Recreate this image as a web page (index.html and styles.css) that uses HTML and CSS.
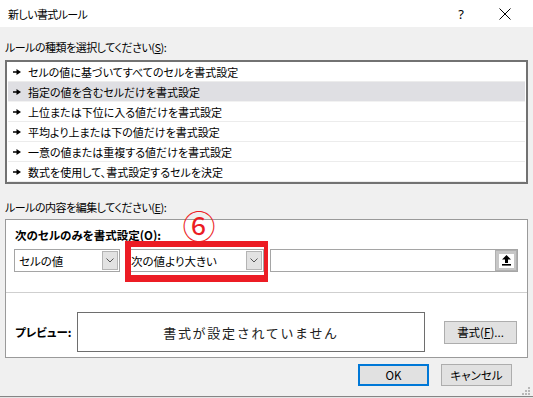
FILE: index.html
```html
<!DOCTYPE html>
<html lang="ja">
<head>
<meta charset="utf-8">
<title>新しい書式ルール</title>
<link rel="stylesheet" href="styles.css">
</head>
<body>
<div class="dialog">
  <header class="titlebar">
    <span class="title">新しい書式ルール</span>
    <div class="tb-icons">
      <span class="help">?</span>
      <svg class="close" width="12" height="12" viewBox="0 0 12 12"><path d="M0.5 0.5L11.5 11.5M11.5 0.5L0.5 11.5" stroke="#000" stroke-width="1" fill="none"/></svg>
    </div>
  </header>
  <main class="content">
    <div class="label label1">ルールの種類を選択してください(<u>S</u>):</div>
    <ul class="listbox">
      <li class="item"><svg class="bullet" width="8" height="6" viewBox="0 0 8 6"><path d="M0 2.3h3.5V0l4.5 3-4.5 3V3.7H0z" fill="#000"/></svg><span>セルの値に基づいてすべてのセルを書式設定</span></li>
      <li class="item selected"><svg class="bullet" width="8" height="6" viewBox="0 0 8 6"><path d="M0 2.3h3.5V0l4.5 3-4.5 3V3.7H0z" fill="#000"/></svg><span>指定の値を含むセルだけを書式設定</span></li>
      <li class="item"><svg class="bullet" width="8" height="6" viewBox="0 0 8 6"><path d="M0 2.3h3.5V0l4.5 3-4.5 3V3.7H0z" fill="#000"/></svg><span>上位または下位に入る値だけを書式設定</span></li>
      <li class="item"><svg class="bullet" width="8" height="6" viewBox="0 0 8 6"><path d="M0 2.3h3.5V0l4.5 3-4.5 3V3.7H0z" fill="#000"/></svg><span>平均より上または下の値だけを書式設定</span></li>
      <li class="item"><svg class="bullet" width="8" height="6" viewBox="0 0 8 6"><path d="M0 2.3h3.5V0l4.5 3-4.5 3V3.7H0z" fill="#000"/></svg><span>一意の値または重複する値だけを書式設定</span></li>
      <li class="item"><svg class="bullet" width="8" height="6" viewBox="0 0 8 6"><path d="M0 2.3h3.5V0l4.5 3-4.5 3V3.7H0z" fill="#000"/></svg><span>数式を使用して、書式設定するセルを決定</span></li>
    </ul>
    <div class="label label2">ルールの内容を編集してください(<u>E</u>):</div>
    <section class="panel">
      <div class="panel-top">
        <div class="heading">次のセルのみを書式設定(<u>O</u>):</div>
        <div class="combo-row">
          <div class="combo c1"><span class="combo-text">セルの値</span><span class="dd"><svg width="8" height="5" viewBox="0 0 8 5"><path d="M0.5 0.5L4 4L7.5 0.5" stroke="#555" stroke-width="1" fill="none"/></svg></span></div>
          <div class="combo c2"><span class="combo-text">次の値より大きい</span><span class="dd"><svg width="8" height="5" viewBox="0 0 8 5"><path d="M0.5 0.5L4 4L7.5 0.5" stroke="#555" stroke-width="1" fill="none"/></svg></span></div>
          <div class="field"><span class="ref-btn"><span class="ref-inner"><svg width="11" height="11" viewBox="0 0 11 11"><path d="M5.5 0L10 4.5H7V8H4V4.5H1z" fill="#000"/><rect x="1" y="9" width="9" height="1.6" fill="#000"/></svg></span></span></div>
        </div>
        <div class="annot-box"></div>
        <div class="annot-num">⑥</div>
      </div>
      <div class="divider"></div>
      <div class="preview-row">
        <span class="preview-label">プレビュー:</span>
        <div class="preview-box">書式が設定されていません</div>
        <button class="btn fmt-btn">書式(<u>F</u>)...</button>
      </div>
    </section>
    <div class="btn-row">
      <button class="btn ok">OK</button>
      <button class="btn cancel">キャンセル</button>
    </div>
  </main>
  <footer class="bottom"></footer>
  <svg class="grip" width="9" height="9" viewBox="0 0 9 9">
    <rect x="7" y="1" width="2" height="2" fill="#b8b8b8"/>
    <rect x="4" y="4" width="2" height="2" fill="#b8b8b8"/>
    <rect x="7" y="4" width="2" height="2" fill="#b8b8b8"/>
    <rect x="1" y="7" width="2" height="2" fill="#b8b8b8"/>
    <rect x="4" y="7" width="2" height="2" fill="#b8b8b8"/>
    <rect x="7" y="7" width="2" height="2" fill="#b8b8b8"/>
  </svg>
</div>
</body>
</html>
```

FILE: styles.css
```css
* { box-sizing: border-box; }
html, body { margin: 0; padding: 0; }
body {
  width: 533px;
  height: 398px;
  overflow: hidden;
  background: #f0f0f0;
  font-family: "Noto Sans CJK JP", "Noto Sans", sans-serif;
  font-size: 11px;
  color: #000;
  font-feature-settings: "palt";
}
u { text-decoration: underline; text-underline-offset: 1px; }

.dialog {
  position: relative;
  width: 533px;
  height: 398px;
  display: flex;
  flex-direction: column;
}

.titlebar {
  height: 27px;
  background: #fff;
  display: flex;
  align-items: center;
  justify-content: space-between;
  padding-left: 8px;
  flex: none;
}
.title { font-size: 11px; line-height: 16px; letter-spacing: -0.6px; }
.tb-icons { display: flex; align-items: center; }
.help { font-family: "Noto Sans", sans-serif; font-size: 13px; margin-right: 35px; line-height: 16px; }
.close { margin-right: 22px; display: block; }

.content {
  padding: 0 5px;
  display: flex;
  flex-direction: column;
  flex: none;
}
.label { height: 16px; line-height: 16px; white-space: nowrap; letter-spacing: -0.5px; }
.label1 { margin-top: 12px; margin-bottom: 5px; }
.label2 { margin-top: 15px; margin-bottom: 4px; }

.listbox {
  list-style: none;
  margin: 0;
  padding: 0 1px;
  height: 124px;
  border: 2px solid #727272;
  background: #fff;
}
.item {
  height: 20px;
  border-bottom: 1px solid #ececec;
  display: flex;
  align-items: center;
  padding-left: 5px;
  white-space: nowrap;
  font-size: 11px;
}
.item.selected { background: #dfdfe3; border-bottom-color: #f2f2f2; }
.bullet { display: block; margin-right: 7px; flex: none; }

.panel {
  height: 139px;
  border: 1px solid #9a9a9a;
  background: #fff;
  display: flex;
  flex-direction: column;
}
.panel-top {
  position: relative;
  padding: 7px 9px 0 8px;
  height: 72px;
}
.heading { font-weight: bold; font-size: 11.5px; height: 16px; line-height: 16px; padding-left: 1px; white-space: nowrap; }
.combo-row { display: flex; gap: 6px; margin-top: 6px; }
.combo {
  height: 23px;
  border: 1px solid #a5a5a5;
  background: #fff;
  display: flex;
  align-items: center;
  justify-content: space-between;
  padding: 0 0 0 4px;
  font-size: 11.5px;
}
.c1 { width: 106px; }
.c2 { width: 138px; }
.combo-text { line-height: 16px; white-space: nowrap; }
.dd {
  width: 16px;
  height: 19px;
  margin-right: 1px;
  background: #e2e2e2;
  border: 1px solid #b4b4b4;
  display: flex;
  align-items: center;
  justify-content: center;
}
.dd svg { display: block; }
.field {
  width: 248px;
  height: 23px;
  border: 1px solid #a5a5a5;
  display: flex;
  justify-content: flex-end;
}
.ref-btn {
  width: 22px;
  height: 21px;
  background: #c7c7c7;
  border: 1px solid #b0b0b0;
  display: flex;
  align-items: center;
  justify-content: center;
}
.ref-inner {
  width: 15px;
  height: 14px;
  background: #fff;
  display: flex;
  align-items: center;
  justify-content: center;
}
.ref-inner svg { display: block; }

.annot-box {
  position: absolute;
  left: 119px;
  top: 21px;
  width: 143px;
  height: 41px;
  border-style: solid;
  border-color: #ec1c24;
  border-width: 6px 4px 7px 6px;
}
.annot-num {
  position: absolute;
  left: 173px;
  top: -15px;
  width: 40px;
  height: 40px;
  display: flex;
  align-items: center;
  justify-content: center;
  font-size: 33px;
  line-height: 1;
  color: #ec1c24;
  font-feature-settings: normal;
}

.divider { height: 1px; background: #cfcfcf; }

.preview-row {
  display: flex;
  align-items: center;
  padding: 19px 10px 0 9px;
}
.preview-label { width: 62px; font-weight: bold; font-size: 11.5px; white-space: nowrap; }
.preview-box {
  width: 348px;
  height: 40px;
  border: 1px solid #6e6e6e;
  display: flex;
  align-items: center;
  justify-content: center;
  font-size: 13px;
  letter-spacing: 1.7px;
  font-feature-settings: normal;
  color: #222;
}
.btn {
  font-family: "Noto Sans CJK JP", "Noto Sans", sans-serif;
  font-size: 11.5px;
  font-feature-settings: "palt";
  color: #000;
  background: #e1e1e1;
  border: 1px solid #adadad;
  padding: 0;
  height: 23px;
  line-height: 16px;
}
.fmt-btn { width: 73px; margin-left: 19px; }

.btn-row {
  display: flex;
  justify-content: flex-end;
  gap: 12px;
  margin-top: 6px;
  padding-right: 16px;
}
.ok, .cancel { width: 71px; height: 22px; }
.ok { border: 2px solid #0078d7; }

.bottom {
  margin-top: 10px;
  height: 2px;
  border-top: 1px solid #858585;
  background: #e4e4e4;
  flex: none;
}
.grip { position: absolute; right: 3px; bottom: 3px; display: block; }
```
